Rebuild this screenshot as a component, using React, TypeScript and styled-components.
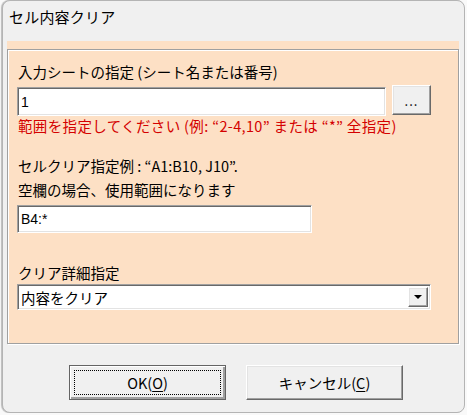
import React from 'react';
import styled, { createGlobalStyle } from 'styled-components';

const GlobalStyle = createGlobalStyle`
  html, body {
    margin: 0;
    padding: 0;
    background: #f9f9f9;
  }
  body {
    font-family: "Noto Sans CJK JP", "Liberation Sans", sans-serif;
    color: #000;
  }
`;

const Window = styled.div`
  margin: 0 2px 0 2px;
  width: 463px;
  height: 413px;
  box-sizing: border-box;
  background: #f0f0f0;
  border: 1px solid #b4b4b4;
  border-radius: 8px;
  box-shadow: -1px 0 1px rgba(0, 0, 0, 0.25);
  padding: 0 5px 0 4px;
  display: flex;
  flex-direction: column;
`;

const TitleBar = styled.div`
  height: 40px;
  padding: 3px 0 0 2px;
  box-sizing: border-box;
  font-size: 15px;
  line-height: 26px;
  letter-spacing: 0.2px;
`;

const PeachBand = styled.div`
  background: #fde0c5;
  padding-top: 8px;
`;

const Frame = styled.div`
  background: #fde0c5;
  border: 1px solid #a0a0a0;
  box-shadow: 1px 1px 0 #ffffff, inset 1px 1px 0 #ffffff;
  padding: 0 27px 33px 9px;
`;

const Label = styled.div<{ $top: number; $lh?: number; $red?: boolean }>`
  margin-top: ${(p) => p.$top}px;
  font-size: 14.5px;
  line-height: ${(p) => p.$lh ?? 20}px;
  color: ${(p) => (p.$red ? '#d40000' : '#000')};
  letter-spacing: ${(p) => (p.$red ? '0.35px' : '0')};
  padding-left: 1px;
  white-space: nowrap;
`;

const Row = styled.div<{ $top: number }>`
  display: flex;
  align-items: flex-start;
  gap: 6px;
  margin-top: ${(p) => p.$top}px;
`;

const Sunken = styled.div<{ $w: number; $h: number }>`
  width: ${(p) => p.$w}px;
  height: ${(p) => p.$h}px;
  box-sizing: border-box;
  background: #fff;
  border: 1px solid;
  border-color: #a0a0a0 #ffffff #ffffff #a0a0a0;
  box-shadow: inset 1px 1px 0 #696969, inset -1px -1px 0 #e3e3e3;
  display: flex;
  align-items: center;
  padding: 0 3px;
  font-family: "Liberation Sans", "Noto Sans CJK JP", sans-serif;
  font-size: 14px;
`;

const TextBox = styled(Sunken)`
  margin-top: 0;
`;

const SelectBox = styled(Sunken)`
  margin-top: 1px;
  padding-right: 2px;
  font-family: "Noto Sans CJK JP", sans-serif;
  font-size: 14.5px;
  justify-content: space-between;
`;

const Raised = styled.button<{ $w: number; $h: number }>`
  width: ${(p) => p.$w}px;
  height: ${(p) => p.$h}px;
  box-sizing: border-box;
  background: #f0f0f0;
  border: 1px solid;
  border-color: #ffffff #696969 #696969 #ffffff;
  box-shadow: inset -1px -1px 0 #a0a0a0, inset 1px 1px 0 #e3e3e3;
  padding: 0;
  display: flex;
  align-items: center;
  justify-content: center;
  font-family: "Noto Sans CJK JP", "Liberation Sans", sans-serif;
  color: #000;
  cursor: pointer;
`;

const DotsButton = styled(Raised)`
  margin-top: -2px;
  font-size: 13px;
  letter-spacing: 1px;
`;

const DropButton = styled(Raised)`
  width: 20px;
  height: 20px;
`;

const Triangle = styled.span`
  width: 0;
  height: 0;
  border-left: 4px solid transparent;
  border-right: 4px solid transparent;
  border-top: 4px solid #000;
`;

const ButtonBar = styled.div`
  display: flex;
  justify-content: center;
  gap: 20px;
  padding: 21px 0 0 0;
  margin-left: 6px;
`;

const DialogButton = styled(Raised)<{ $default?: boolean }>`
  position: relative;
  font-size: 14.5px;
  ${(p) =>
    p.$default &&
    `
    border-color: #646464;
    box-shadow: inset 1px 1px 0 #ffffff, inset -2px -2px 0 #a0a0a0;
  `}
`;

const FocusRing = styled.span`
  position: absolute;
  inset: 4px;
  border: 1px dotted #000;
  pointer-events: none;
`;

const Mnemonic = styled.span`
  text-decoration: underline;
  text-underline-offset: 2px;
`;

export default function App() {
  return (
    <>
      <GlobalStyle />
      <Window>
        <TitleBar>セル内容クリア</TitleBar>
        <PeachBand>
          <Frame>
            <Label $top={12}>入力シートの指定 (シート名または番号)</Label>
            <Row $top={5}>
              <TextBox $w={369} $h={29}>1</TextBox>
              <DotsButton $w={39} $h={30}>...</DotsButton>
            </Row>
            <Label $top={0} $red>
              範囲を指定してください (例: “2-4,10” または “*” 全指定)
            </Label>
            <Label $top={18} $lh={24}>
              セルクリア指定例 : “A1:B10, J10”.
              <br />
              空欄の場合、使用範囲になります
            </Label>
            <Row $top={3}>
              <TextBox $w={295} $h={28}>B4:*</TextBox>
            </Row>
            <Label $top={30}>クリア詳細指定</Label>
            <SelectBox $w={414} $h={26}>
              内容をクリア
              <DropButton $w={20} $h={20} as="span">
                <Triangle />
              </DropButton>
            </SelectBox>
          </Frame>
        </PeachBand>
        <ButtonBar>
          <DialogButton $w={157} $h={35} $default>
            <FocusRing />
            OK(<Mnemonic>O</Mnemonic>)
          </DialogButton>
          <DialogButton $w={157} $h={35}>
            キャンセル(<Mnemonic>C</Mnemonic>)
          </DialogButton>
        </ButtonBar>
      </Window>
    </>
  );
}
